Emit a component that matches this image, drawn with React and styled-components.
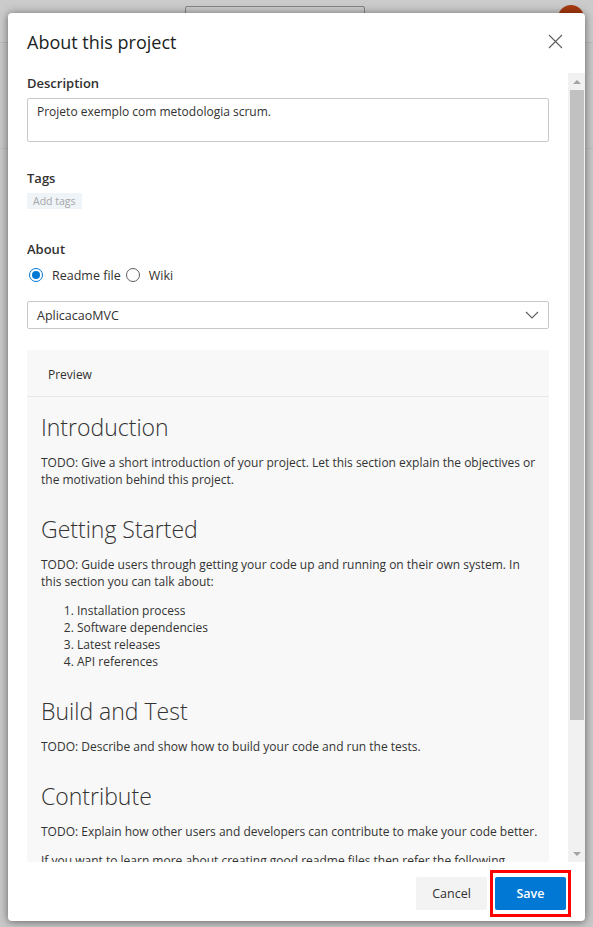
import React from 'react';
import styled, { createGlobalStyle } from 'styled-components';

const GlobalStyle = createGlobalStyle`
  html, body {
    margin: 0;
    padding: 0;
    height: 100%;
    overflow: hidden;
  }
  body {
    background: #c8c8c8;
    font-family: "Open Sans", "Noto Sans", sans-serif;
    color: #323130;
  }
  * { box-sizing: border-box; }
`;

const Page = styled.div`
  position: relative;
  width: 100%;
  height: 100vh;
`;

const TopBar = styled.div`
  height: 43px;
  display: flex;
  align-items: flex-start;
  padding: 6px 9px 0 185px;
  border-bottom: 1px solid #b9b9b9;
  background: #cbcbcb;
`;

const SearchBox = styled.div`
  width: 180px;
  height: 28px;
  border: 1px solid #858585;
  border-radius: 2px;
`;

const Avatar = styled.div`
  margin-left: auto;
  margin-top: -1px;
  width: 26px;
  height: 26px;
  border-radius: 50%;
  background: #a63a10;
`;

const SubBar = styled.div`
  height: 106px;
  border-bottom: 1px solid #bdbdbd;
`;

const Dialog = styled.div`
  position: absolute;
  left: 8px;
  top: 13px;
  width: 577px;
  height: 908px;
  background: #fff;
  border-radius: 4px;
  box-shadow: 0 0 10px rgba(0, 0, 0, 0.35), 0 2px 6px rgba(0, 0, 0, 0.2);
  display: flex;
  flex-direction: column;
  overflow: hidden;
`;

const Header = styled.div`
  height: 60px;
  flex: none;
  display: flex;
  align-items: center;
  justify-content: space-between;
  padding: 0 22px 3px 19px;
`;

const Title = styled.h1`
  margin: 0;
  font-size: 18px;
  font-weight: 500;
  color: #201f1e;
`;

const CloseButton = styled.button`
  border: none;
  background: none;
  padding: 0;
  width: 16px;
  height: 16px;
  display: flex;
  align-items: center;
  justify-content: center;
`;

const Body = styled.div`
  flex: 1;
  min-height: 0;
  display: flex;
`;

const Content = styled.div`
  flex: 1;
  min-width: 0;
  overflow: hidden;
  padding: 0 19px;
`;

const ScrollBar = styled.div`
  width: 17px;
  flex: none;
  background: #f1f1f1;
  display: flex;
  flex-direction: column;
  align-items: center;
`;

const ScrollArrow = styled.div`
  width: 17px;
  height: 17px;
  flex: none;
  display: flex;
  align-items: center;
  justify-content: center;

  &::before {
    content: '';
    width: 0;
    height: 0;
    border-left: 4px solid transparent;
    border-right: 4px solid transparent;
    ${p => (p.$down ? 'border-top: 4px solid #a3a3a3;' : 'border-bottom: 4px solid #a3a3a3;')}
  }
`;

const Track = styled.div`
  flex: 1;
  width: 100%;
  padding: 0 1px 0 2px;
`;

const Thumb = styled.div`
  width: 100%;
  background: #c1c1c1;
`;

const Label = styled.div`
  font-size: 13px;
  font-weight: 600;
  line-height: 20px;
  color: #323130;
  margin-top: ${p => p.$top || 0}px;
`;

const TextBox = styled.div`
  margin-top: 5px;
  height: 44px;
  border: 1px solid #c8c8c8;
  border-radius: 2px;
  padding: 4px 9px;
  font-size: 12px;
  line-height: 18px;
  color: #323130;
`;

const TagChip = styled.span`
  display: inline-block;
  margin-top: 3px;
  height: 16px;
  padding: 0 6px;
  background: #eff4f9;
  color: #a6a6a6;
  font-size: 10.5px;
  line-height: 16px;
`;

const RadioRow = styled.div`
  margin-top: 7px;
  height: 18px;
  display: flex;
  align-items: center;
  padding-left: 2px;
  font-size: 12.5px;
  color: #323130;
`;

const RadioItem = styled.label`
  display: flex;
  align-items: center;
  gap: 9px;
  margin-right: 5px;
`;

const RadioCircle = styled.span`
  width: 14px;
  height: 14px;
  border-radius: 50%;
  border: 1px solid ${p => (p.$checked ? '#0078d4' : '#605e5c')};
  display: flex;
  align-items: center;
  justify-content: center;

  &::after {
    content: '';
    width: 8px;
    height: 8px;
    border-radius: 50%;
    background: ${p => (p.$checked ? '#0078d4' : 'transparent')};
  }
`;

const Select = styled.div`
  margin-top: 17px;
  height: 28px;
  border: 1px solid #c8c8c8;
  border-radius: 2px;
  display: flex;
  align-items: center;
  justify-content: space-between;
  padding: 0 9px;
  font-size: 12.5px;
  color: #323130;
`;

const Preview = styled.div`
  margin-top: 21px;
  height: 650px;
  background: #f8f8f8;
  overflow: hidden;
`;

const PreviewHead = styled.div`
  height: 47px;
  display: flex;
  align-items: center;
  padding: 2px 0 0 21px;
  border-bottom: 1px solid #e6e6e6;
  font-size: 12px;
  color: #323130;
`;

const Markdown = styled.div`
  padding: 14px 10px 0 14px;
  color: #333;

  h2 {
    margin: 25px 0 11px;
    font-size: 23px;
    font-weight: 300;
    line-height: 32px;
    color: #333;
  }
  h2:first-child {
    margin-top: 0;
  }
  p {
    margin: 0 0 12px;
    font-size: 12px;
    line-height: 17px;
  }
  ol {
    margin: 0 0 12px;
    padding-left: 36px;
    font-size: 12px;
    line-height: 17px;
  }
  a {
    color: #0078d4;
    text-decoration: none;
  }
`;

const Footer = styled.div`
  flex: none;
  display: flex;
  justify-content: flex-end;
  gap: 8px;
  padding: 15px 19px 11px;
`;

const Button = styled.button`
  height: 33px;
  min-width: 71px;
  padding: 0 16px;
  border: none;
  border-radius: 2px;
  font-family: inherit;
  font-size: 12.5px;
  font-weight: ${p => (p.$primary ? 600 : 400)};
  background: ${p => (p.$primary ? '#0078d4' : '#f3f3f3')};
  color: ${p => (p.$primary ? '#fff' : '#323130')};
`;

const Highlight = styled.div`
  position: relative;

  &::after {
    content: '';
    position: absolute;
    left: -5px;
    right: -5px;
    top: -7px;
    bottom: -7px;
    border: 3px solid #f00;
    pointer-events: none;
  }
`;

export default function App() {
  return (
    <>
      <GlobalStyle />
      <Page>
        <TopBar>
          <SearchBox />
          <Avatar />
        </TopBar>
        <SubBar />

        <Dialog>
          <Header>
            <Title>About this project</Title>
            <CloseButton aria-label="Close">
              <svg width="15" height="15" viewBox="0 0 15 15">
                <path d="M1 1L14 14M14 1L1 14" stroke="#605e5c" strokeWidth="1.1" fill="none" />
              </svg>
            </CloseButton>
          </Header>

          <Body>
            <Content>
              <Label>Description</Label>
              <TextBox>Projeto exemplo com metodologia scrum.</TextBox>

              <Label $top={26}>Tags</Label>
              <TagChip>Add tags</TagChip>

              <Label $top={29}>About</Label>
              <RadioRow>
                <RadioItem>
                  <RadioCircle $checked />
                  Readme file
                </RadioItem>
                <RadioItem>
                  <RadioCircle />
                  Wiki
                </RadioItem>
              </RadioRow>

              <Select>
                AplicacaoMVC
                <svg width="14" height="8" viewBox="0 0 14 8">
                  <path d="M1 1L7 7L13 1" stroke="#605e5c" strokeWidth="1.1" fill="none" />
                </svg>
              </Select>

              <Preview>
                <PreviewHead>Preview</PreviewHead>
                <Markdown>
                  <h2>Introduction</h2>
                  <p>
                    TODO: Give a short introduction of your project. Let this section explain the objectives or
                    the motivation behind this project.
                  </p>
                  <h2>Getting Started</h2>
                  <p>
                    TODO: Guide users through getting your code up and running on their own system. In this
                    section you can talk about:
                  </p>
                  <ol>
                    <li>Installation process</li>
                    <li>Software dependencies</li>
                    <li>Latest releases</li>
                    <li>API references</li>
                  </ol>
                  <h2>Build and Test</h2>
                  <p>TODO: Describe and show how to build your code and run the tests.</p>
                  <h2>Contribute</h2>
                  <p>TODO: Explain how other users and developers can contribute to make your code better.</p>
                  <p>
                    If you want to learn more about creating good readme files then refer the following{' '}
                    <a href="#guidelines">guidelines</a>. You can also seek inspiration from the below readme
                    files:
                  </p>
                </Markdown>
              </Preview>
            </Content>

            <ScrollBar>
              <ScrollArrow />
              <Track>
                <Thumb style={{ height: `${Math.round(755 * (789 / 946))}px` }} />
              </Track>
              <ScrollArrow $down />
            </ScrollBar>
          </Body>

          <Footer>
            <Button>Cancel</Button>
            <Highlight>
              <Button $primary>Save</Button>
            </Highlight>
          </Footer>
        </Dialog>
      </Page>
    </>
  );
}
